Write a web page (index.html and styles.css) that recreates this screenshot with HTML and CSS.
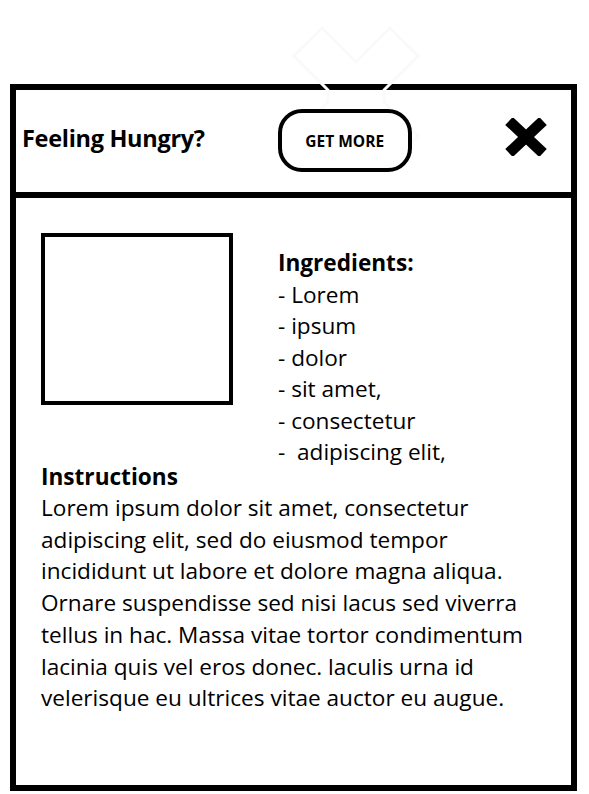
FILE: index.html
```html
<!DOCTYPE html>
<html lang="en">
<head>
<meta charset="utf-8">
<title>Feeling Hungry?</title>
<link rel="stylesheet" href="styles.css">
</head>
<body>
<svg class="ghost" width="140" height="150" viewBox="-70 -75 140 150" aria-hidden="true">
  <polygon points="0,-34 34,-68 62,-40 28,-6 28,6 62,40 34,68 0,34 -34,68 -62,40 -28,6 -28,-6 -62,-40 -34,-68" fill="none" stroke="#fafafa" stroke-width="3"/>
</svg>
<div class="card">
  <header class="card-head">
    <h1 class="title">Feeling Hungry?</h1>
    <button class="more">GET MORE</button>
    <svg class="close" width="42" height="38" viewBox="0 0 42 38" aria-label="close">
      <path d="M4 3 L38 35 M38 3 L4 35" stroke="#000" stroke-width="11" stroke-linecap="butt" fill="none"/>
    </svg>
  </header>
  <main class="card-body">
    <div class="top-row">
      <div class="photo"></div>
      <div class="ingredients">
        <h2 class="sub">Ingredients:</h2>
        <div class="line">- Lorem</div>
        <div class="line">- ipsum</div>
        <div class="line">- dolor</div>
        <div class="line">- sit amet,</div>
        <div class="line">- consectetur</div>
        <div class="line">-&nbsp; adipiscing elit,</div>
      </div>
    </div>
    <h2 class="sub instr">Instructions</h2>
    <p class="text">Lorem ipsum dolor sit amet, consectetur adipiscing elit, sed do eiusmod tempor incididunt ut labore et dolore magna aliqua. Ornare suspendisse sed nisi lacus sed viverra tellus in hac. Massa vitae tortor condimentum lacinia quis vel eros donec. laculis urna id velerisque eu ultrices vitae auctor eu augue.</p>
  </main>
</div>
</body>
</html>
```

FILE: styles.css
```css
html, body {
  margin: 0;
  padding: 0;
  background: #fff;
}
body {
  font-family: "Open Sans", "Noto Sans", sans-serif;
  color: #000;
  position: relative;
  width: 589px;
  height: 794px;
  overflow: hidden;
}
.ghost {
  position: absolute;
  left: 286px;
  top: 21px;
  z-index: 2;
  pointer-events: none;
}
.card {
  box-sizing: border-box;
  margin: 84px 0 0 10px;
  width: 567px;
  height: 707px;
  border: 6px solid #000;
  display: flex;
  flex-direction: column;
}
.card-head {
  height: 102px;
  border-bottom: 6px solid #000;
  display: flex;
  align-items: center;
  padding: 0 24px 0 6px;
  flex: none;
}
.title {
  margin: 0;
  font-size: 23.5px;
  font-weight: 700;
  letter-spacing: -0.3px;
  position: relative;
  top: -3px;
  white-space: nowrap;
}
.more {
  margin-left: 73px;
  width: 134px;
  height: 63px;
  box-sizing: border-box;
  border: 4px solid #000;
  border-radius: 24px;
  background: #fff;
  font-family: inherit;
  font-size: 15.5px;
  font-weight: 700;
  color: #000;
  position: relative;
  top: -1px;
  z-index: 3;
  padding: 2px 0 0 0;
}
.close {
  margin-left: auto;
  position: relative;
  top: -4px;
}
.card-body {
  padding: 35px 0 0 25px;
  flex: 1;
}
.top-row {
  display: flex;
  align-items: flex-start;
  gap: 45px;
}
.photo {
  width: 192px;
  height: 172px;
  box-sizing: border-box;
  border: 4px solid #000;
  flex: none;
}
.ingredients {
  margin-top: 14px;
  font-size: 22.6px;
  line-height: 31.5px;
}
.sub {
  margin: 0;
  font-size: 22.6px;
  font-weight: 700;
  line-height: 31.5px;
}
.instr {
  margin-top: -7px;
}
.line {
  white-space: pre;
}
.text {
  margin: 0;
  width: 500px;
  font-size: 22.6px;
  line-height: 31.7px;
}
```
